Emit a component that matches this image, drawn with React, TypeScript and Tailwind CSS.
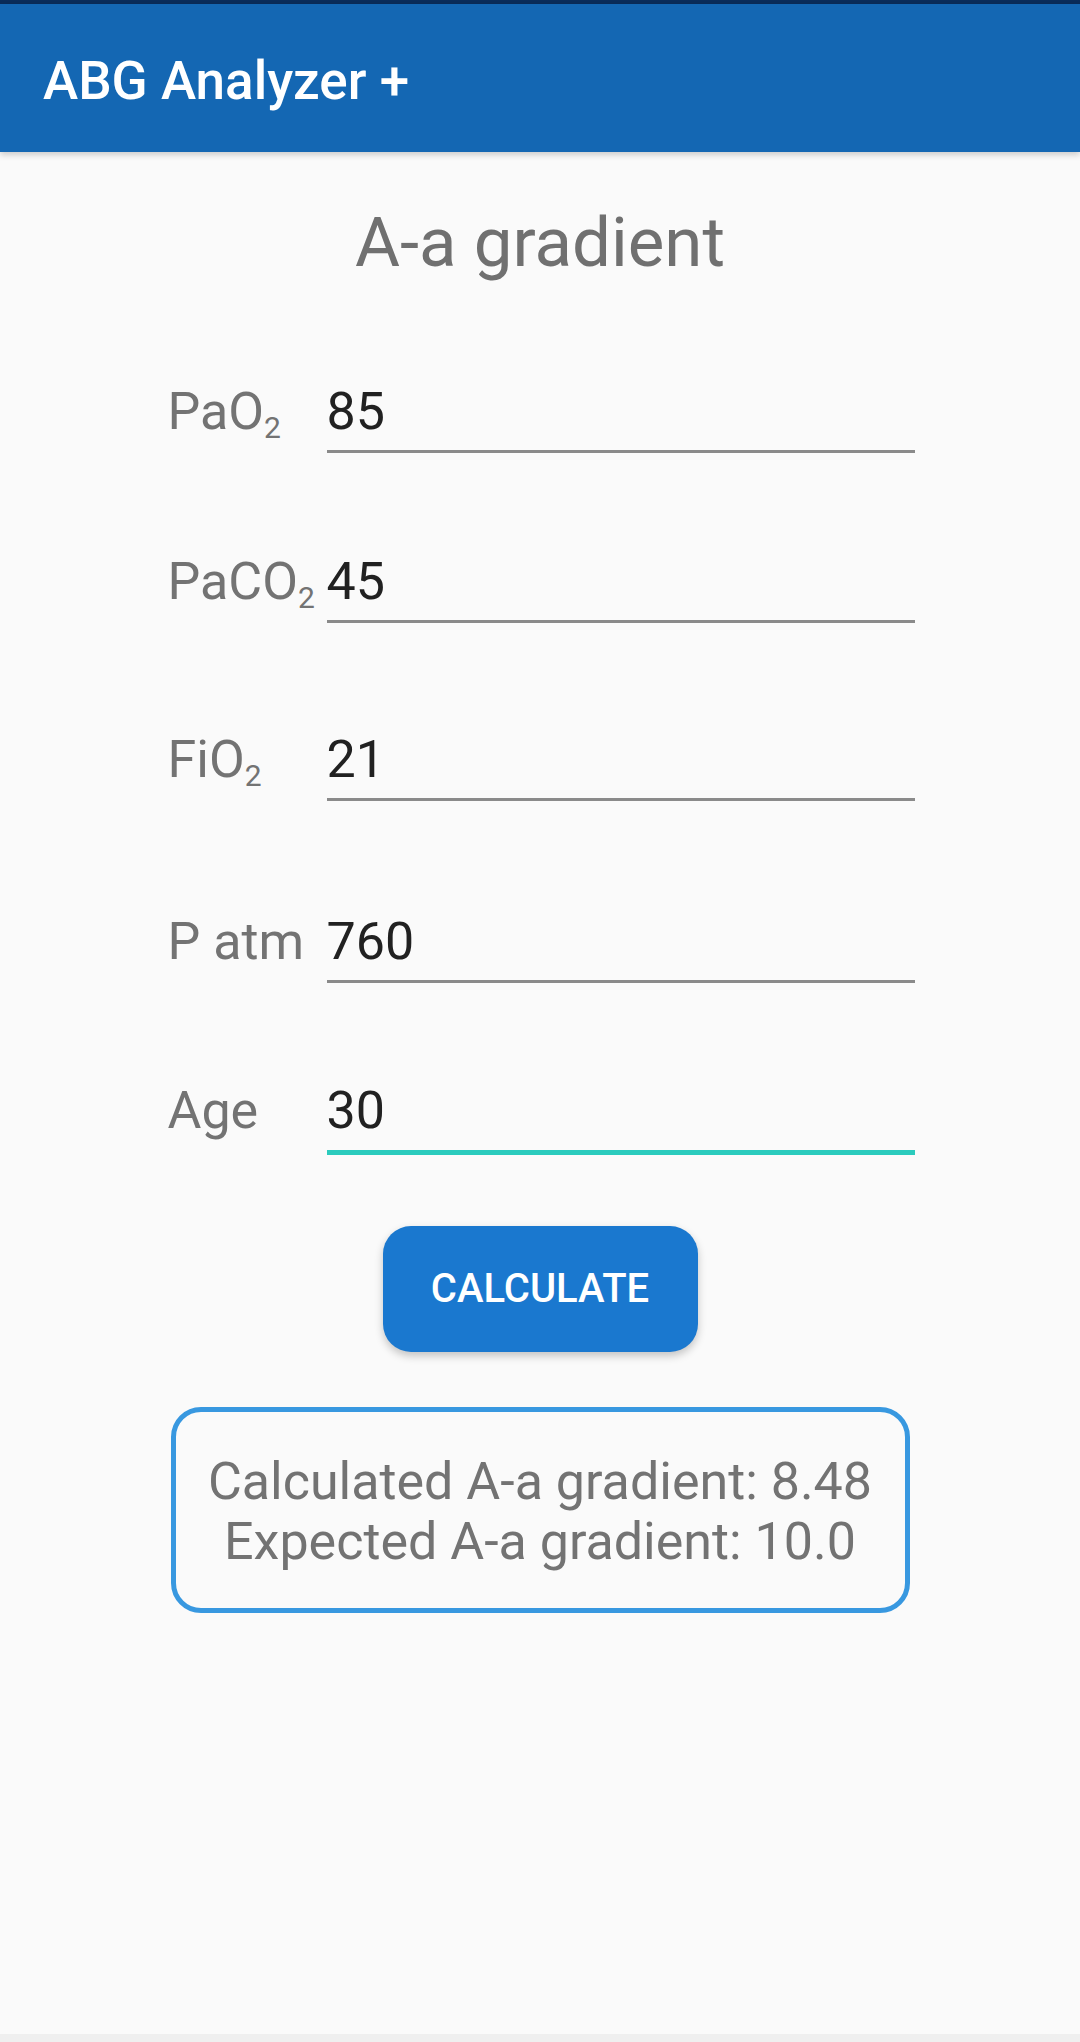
import React from "react";

interface FieldRowProps {
  label: React.ReactNode;
  value: string;
  focused?: boolean;
  className?: string;
}

function Sub({ children }: { children: React.ReactNode }) {
  return <span className="align-[-9px] text-[30px] leading-none">{children}</span>;
}

function FieldRow({ label, value, focused, className }: FieldRowProps) {
  return (
    <div className={`flex ${className ?? ""}`}>
      <div className="w-[159px] shrink-0 text-[52px] leading-[61px] text-[#737373]">
        {label}
      </div>
      <div
        className={
          focused
            ? "flex-1 border-b-[5px] border-[#2bcbbd] pb-[9px] text-[52px] leading-[61px] text-[#212121]"
            : "flex-1 border-b-[3px] border-[#8a8a8a] pb-[8px] text-[52px] leading-[61px] text-[#212121]"
        }
      >
        {value}
      </div>
    </div>
  );
}

export default function App() {
  return (
    <div
      className="flex h-[2042px] w-[1080px] flex-col bg-[#fafafa]"
      style={{ fontFamily: "Roboto, 'Noto Sans', sans-serif" }}
    >
      {/* app bar */}
      <div className="h-[4px] bg-[#0a2c5a]" />
      <header className="relative z-10 flex h-[148px] items-center bg-[#1467b3] pl-[43px] pt-[6px] shadow-[0_3px_6px_rgba(0,0,0,0.18)]">
        <h1 className="text-[53px] font-medium leading-none text-white">ABG Analyzer +</h1>
      </header>

      <main className="flex flex-1 flex-col items-center">
        <h2 className="mt-[50px] text-[69px] leading-[81px] text-[#707070]">A-a gradient</h2>

        <div className="mt-[98px] w-[749px] pl-[2px]">
          <FieldRow
            label={
              <>
                PaO<Sub>2</Sub>
              </>
            }
            value="85"
          />
          <FieldRow
            className="mt-[98px]"
            label={
              <>
                PaCO<Sub>2</Sub>
              </>
            }
            value="45"
          />
          <FieldRow
            className="mt-[106px]"
            label={
              <>
                FiO<Sub>2</Sub>
              </>
            }
            value="21"
          />
          <FieldRow className="mt-[110px]" label="P atm" value="760" />
          <FieldRow className="mt-[97px]" label="Age" value="30" focused />
        </div>

        <button
          type="button"
          className="mt-[71px] h-[126px] w-[315px] rounded-[28px] bg-[#1a78cf] text-[40px] font-medium text-white shadow-[0_4px_8px_rgba(0,0,0,0.22)]"
        >
          CALCULATE
        </button>

        <div className="mt-[55px] w-[739px] rounded-[30px] border-[5px] border-[#3898e0] pb-[36px] pt-[40px] text-center text-[52px] leading-[60px] text-[#737373]">
          <p>Calculated A-a gradient: 8.48</p>
          <p>Expected A-a gradient: 10.0</p>
        </div>
      </main>

      <div className="h-[8px] bg-[#efefef]" />
    </div>
  );
}
